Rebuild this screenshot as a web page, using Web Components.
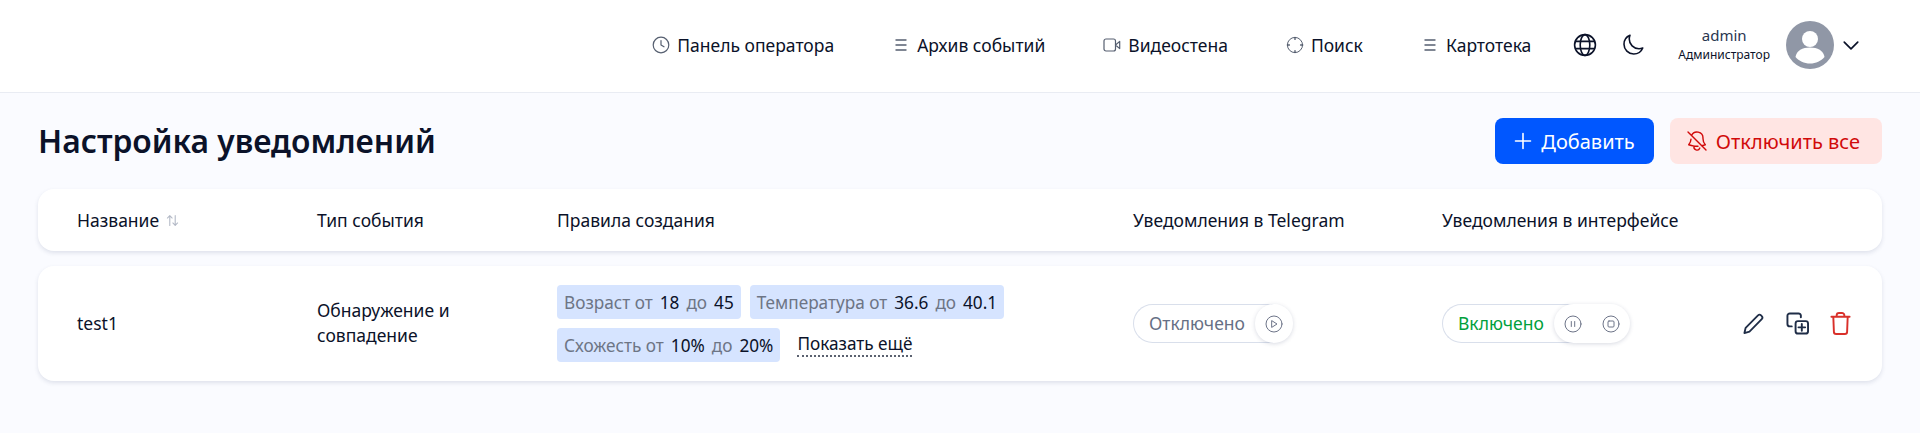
<!DOCTYPE html>
<html lang="ru">
<head>
<meta charset="utf-8">
<title>Настройка уведомлений</title>
<style>
    html, body {
        margin: 0;
        background: #fafbff;
        font-family: "Noto Sans", "Open Sans", sans-serif;
        color: #0b1426;
    }
</style>
</head>
<body>
<app-header>
    <nav-item label="Панель оператора" icon="clock"></nav-item>
    <nav-item label="Архив событий" icon="list"></nav-item>
    <nav-item label="Видеостена" icon="video"></nav-item>
    <nav-item label="Поиск" icon="target"></nav-item>
    <nav-item label="Картотека" icon="list"></nav-item>
</app-header>

<notify-page>
    <span slot="title">Настройка уведомлений</span>
    <action-button slot="actions" kind="primary">Добавить</action-button>
    <action-button slot="actions" kind="danger">Отключить все</action-button>

    <table-head></table-head>
    <rule-row name="test1" type="Обнаружение и совпадение">
        <rule-chip label="Возраст" from="18" to="45"></rule-chip>
        <rule-chip label="Температура" from="36.6" to="40.1"></rule-chip>
        <rule-chip label="Схожесть" from="10%" to="20%"></rule-chip>
        <more-link>Показать ещё</more-link>
    </rule-row>
</notify-page>

<script>
const svg = (w, h, box, body, extra = '') =>
    `<svg width="${w}" height="${h}" viewBox="${box}" fill="none" stroke="currentColor" stroke-linecap="round" stroke-linejoin="round" ${extra}>${body}</svg>`;

const navIcons = {
    clock: svg(18, 18, '0 0 18 18', '<circle cx="9" cy="9" r="7.8" stroke-width="1.2"/><path d="M9 4.6V9l3 1.8" stroke-width="1.2"/>'),
    list: svg(18, 18, '0 0 18 18', '<path d="M4 4h10M4 9h10M4 14h10" stroke-width="1.4"/>'),
    video: svg(18, 18, '0 0 18 18', '<rect x="1" y="3" width="11.5" height="12" rx="2" stroke-width="1.2"/><path d="M12.5 9l4.2-3.6v7.2z" stroke-width="1.2"/>'),
    target: svg(18, 18, '0 0 18 18', '<circle cx="9" cy="9" r="7.6" stroke-width="1"/><path d="M9 1.400v2M9 14.600v2M1.400 9h2M14.600 9h2" stroke-width="1.4"/>')
};

class NavItem extends HTMLElement {
    connectedCallback() {
        const root = this.attachShadow({ mode: 'open' });
        root.innerHTML = `
            <style>
                :host { display: flex; align-items: center; gap: 7px; font-size: 17.5px; font-weight: 400; color: #0b1229; white-space: nowrap; }
                .icon { display: flex; color: #565f70; }
            </style>
            <span class="icon">${navIcons[this.getAttribute('icon')]}</span>
            <span>${this.getAttribute('label')}</span>`;
    }
}

const appHeaderTemplate = document.createElement('template');
appHeaderTemplate.innerHTML = `
    <style>
        :host { display: block; }
        .header {
            height: 92px;
            box-sizing: content-box;
            background: #fff;
            border-bottom: 1px solid #e9ecf3;
            display: flex;
            align-items: center;
            justify-content: flex-end;
            padding-right: 60px;
        }
        .inner { display: flex; align-items: center; margin-top: -2px; }
        nav { display: flex; align-items: center; gap: 58px; }
        .tools { display: flex; align-items: center; gap: 24px; margin-left: 42px; color: #0b1229; }
        .tools svg { display: block; }
        .user { display: flex; align-items: center; margin-left: 33px; }
        .who { display: flex; flex-direction: column; align-items: center; line-height: 1; }
        .who b { font-weight: 400; font-size: 15px; line-height: 20px; color: #2a3650; }
        .who small { font-size: 12px; line-height: 20px; color: #0b1229; }
        .avatar { margin-left: 16px; display: block; }
        .chev { margin-left: 8px; display: block; color: #0b1229; }
    </style>
    <header class="header">
        <div class="inner">
        <nav><slot></slot></nav>
        <div class="tools">
            ${svg(24, 24, '0 0 24 24', '<circle cx="12" cy="12" r="10.4"/><ellipse cx="12" cy="12" rx="4.8" ry="10.4"/><path d="M2.6 8.4h18.8M2.6 15.6h18.8"/>', 'stroke-width="1.6"')}
            ${svg(24, 24, '0 0 24 24', '<path d="M21.752 15.002A9.718 9.718 0 0118 15.75c-5.385 0-9.75-4.365-9.75-9.75 0-1.33.266-2.597.748-3.752A9.753 9.753 0 003 11.25C3 16.635 7.365 21 12.75 21a9.753 9.753 0 009.002-5.998z"/>', 'stroke-width="1.6"')}
        </div>
        <div class="user">
            <div class="who"><b>admin</b><small>Администратор</small></div>
            <svg class="avatar" width="48" height="48" viewBox="0 0 48 48">
                <circle cx="24" cy="24" r="24" fill="#9097a6"/>
                <circle cx="24" cy="18" r="8" fill="#fff"/>
                <path d="M9.5 36c1-6.5 7-9.500 14.500-9.500S37.500 29.500 38.500 36c-3.500 4-8.500 6.500-14.500 6.500S13 40 9.500 36z" fill="#fff"/>
            </svg>
            <span class="chev">${svg(18, 18, '0 0 16 16', '<path d="M2 5.500l6 6 6-6"/>', 'stroke-width="1.5" style="display:block"')}</span>
        </div>
        </div>
    </header>`;

class AppHeader extends HTMLElement {
    constructor() {
        super();
        this.attachShadow({ mode: 'open' });
        this.shadowRoot.appendChild(appHeaderTemplate.content.cloneNode(true));
    }
}

const pageTemplate = document.createElement('template');
pageTemplate.innerHTML = `
    <style>
        :host { display: block; padding: 25px 38px 52px; }
        .top { display: flex; align-items: center; justify-content: space-between; margin-bottom: 25px; }
        h1 { margin: 0; font-size: 31.8px; line-height: 46px; font-weight: 600; color: #0b1229; }
        .actions { display: flex; gap: 16px; }
        .list { display: flex; flex-direction: column; gap: 15px; }
    </style>
    <div class="top">
        <h1><slot name="title"></slot></h1>
        <div class="actions"><slot name="actions"></slot></div>
    </div>
    <div class="list"><slot></slot></div>`;

class NotifyPage extends HTMLElement {
    constructor() {
        super();
        this.attachShadow({ mode: 'open' });
        this.shadowRoot.appendChild(pageTemplate.content.cloneNode(true));
    }
}

class ActionButton extends HTMLElement {
    connectedCallback() {
        const primary = this.getAttribute('kind') === 'primary';
        const icon = primary
            ? svg(20, 20, '0 0 20 20', '<path d="M10 2.500v15M2.500 10h15"/>', 'stroke-width="1.6"')
            : svg(24, 24, '0 0 24 24', '<path d="M9.143 17.082a24.248 24.248 0 003.844.148m-3.844-.148a23.856 23.856 0 01-5.455-1.31 8.964 8.964 0 002.3-5.542m3.155 6.852a3 3 0 005.667 1.97m1.965-2.277L21 21m-4.225-4.225a23.81 23.81 0 003.536-1.003A8.967 8.967 0 0118 9.750V9A6 6 0 006.530 6.530m10.245 10.245L6.530 6.530M3 3l3.530 3.530"/>', 'stroke-width="1.4"');
        const root = this.attachShadow({ mode: 'open' });
        root.innerHTML = `
            <style>
                :host {
                    display: flex;
                    align-items: center;
                    height: 46px;
                    box-sizing: border-box;
                    border-radius: 8px;
                    font-size: 20px;
                    font-weight: 400;
                    white-space: nowrap;
                    gap: ${primary ? 8 : 7}px;
                    padding: 0 ${primary ? 19 : 22}px 0 ${primary ? 18 : 15}px;
                    background: ${primary ? '#0057ff' : '#ffe5e3'};
                    color: ${primary ? '#fff' : '#d10a0a'};
                }
                svg { display: block; }
            </style>
            ${icon}<slot></slot>`;
    }
}

const gridStyle = `
    display: grid;
    grid-template-columns: 240px 240px 576px 309px 1fr;
    align-items: center;
    background: #fff;
    border-radius: 16px;
    box-shadow: 0 2px 4px rgba(60, 72, 110, 0.14);
    padding: 0 31px 0 39px;
    box-sizing: border-box;
    font-size: 17.5px;
`;

class TableHead extends HTMLElement {
    connectedCallback() {
        const root = this.attachShadow({ mode: 'open' });
        root.innerHTML = `
            <style>
                :host { ${gridStyle} height: 62px; font-weight: 400; color: #0b1229; white-space: nowrap; }
                .sort { display: flex; align-items: center; gap: 7px; }
                svg { display: block; color: #b3b9c6; }
            </style>
            <div class="sort">Название ${svg(13, 13, '0 0 12 12', '<path d="M3.500 10.500v-9M1.300 3.700l2.200-2.200 2.200 2.200M8.500 1.500v9M6.300 8.300l2.200 2.200 2.200-2.200"/>', 'stroke-width="1"')}</div>
            <div>Тип события</div>
            <div>Правила создания</div>
            <div>Уведомления в Telegram</div>
            <div>Уведомления в интерфейсе</div>`;
    }
}

class RuleChip extends HTMLElement {
    connectedCallback() {
        const a = (n) => this.getAttribute(n);
        const root = this.attachShadow({ mode: 'open' });
        root.innerHTML = `
            <style>
                :host {
                    display: inline-flex;
                    align-items: center;
                    height: 34px;
                    padding: 0 7px;
                    gap: 7px;
                    background: #d6e4ff;
                    border-radius: 4px;
                    font-size: 17.2px;
                    color: #6d7585;
                    white-space: nowrap;
                }
                b { font-weight: 400; color: #0b1229; }
            </style>
            <span>${a('label')} от</span><b>${a('from')}</b><span>до</span><b>${a('to')}</b>`;
    }
}

class MoreLink extends HTMLElement {
    connectedCallback() {
        const root = this.attachShadow({ mode: 'open' });
        root.innerHTML = `
            <style>
                :host { display: inline-block; margin-left: 8px; font-size: 17.2px; line-height: 22px; color: #0b1229; border-bottom: 2px dotted #5b6270; white-space: nowrap; }
            </style>
            <slot></slot>`;
    }
}

const ringIcon = (inner) => svg(18, 18, '0 0 18 18', `<circle cx="9" cy="9" r="8"/>${inner}`, 'stroke-width="1" style="display:block"');

class NotifyToggle extends HTMLElement {
    connectedCallback() {
        const on = this.hasAttribute('on');
        const buttons = on
            ? ringIcon('<path d="M7.300 6.500v5M10.700 6.500v5"/>') + ringIcon('<rect x="6" y="6" width="6" height="6" rx="1"/>')
            : ringIcon('<path d="M7 5.800l5 3.200-5 3.200z"/>');
        const root = this.attachShadow({ mode: 'open' });
        root.innerHTML = `
            <style>
                :host { display: inline-flex; align-items: center; height: 39px; font-size: 17.5px; font-weight: 400; }
                .pill {
                    height: 39px;
                    box-sizing: border-box;
                    display: flex;
                    align-items: center;
                    padding: 0 30px 2px 15px;
                    border: 1px solid #d9dfeb;
                    border-right: 0;
                    border-radius: 20px 0 0 20px;
                    background: #fff;
                    color: ${on ? '#00a03c' : '#667085'};
                    white-space: nowrap;
                }
                .btns {
                    margin-left: -20px;
                    height: 39px;
                    box-sizing: border-box;
                    display: flex;
                    align-items: center;
                    gap: 20px;
                    padding: 0 10px;
                    border-radius: 20px;
                    background: #fff;
                    box-shadow: 0 1px 4px rgba(60, 72, 110, 0.2);
                    color: #6d7488;
                    position: relative;
                }
            </style>
            <div class="pill">${on ? 'Включено' : 'Отключено'}</div>
            <div class="btns">${buttons}</div>`;
    }
}

class RuleRow extends HTMLElement {
    connectedCallback() {
        const root = this.attachShadow({ mode: 'open' });
        root.innerHTML = `
            <style>
                :host { ${gridStyle} height: 115px; color: #0b1229; font-weight: 400; }
                .name { padding-bottom: 2px; }
                .type { max-width: 170px; line-height: 24.500px; padding-bottom: 2px; }
                .rules { display: flex; flex-wrap: wrap; gap: 9px; align-items: center; max-width: 500px; }
                .end { display: flex; align-items: center; justify-content: space-between; }
                .tools { display: flex; align-items: center; gap: 21px; }
                .tools svg { display: block; }
                .dark { color: #1f2d47; }
                .red { color: #d9302a; }
            </style>
            <div class="name">${this.getAttribute('name')}</div>
            <div class="type">${this.getAttribute('type')}</div>
            <div class="rules"><slot></slot></div>
            <div><notify-toggle></notify-toggle></div>
            <div class="end">
                <notify-toggle on></notify-toggle>
                <div class="tools">
                    <span class="dark">${svg(23, 23, '0 0 24 24', '<path d="M2.500 22l1.300-5.500L16.700 3.500a2.300 2.300 0 013.200 0l.7.7a2.300 2.300 0 010 3.200L7.800 20.500z"/>', 'stroke-width="1.9"')}</span>
                    <span class="dark">${svg(23, 23, '0 0 24 24', '<rect x="10" y="9.500" width="13" height="13" rx="2.500"/><path d="M15.500 5.500V3.500A2.500 2.500 0 0013 1.500H4A2.500 2.500 0 001.500 4v8.500A2.500 2.500 0 004 15h2M16.500 12.500v7M13 16h7"/>', 'stroke-width="2"')}</span>
                    <span class="red">${svg(21, 23, '0 0 21 24', '<path d="M1 5h19M6.500 5V3.500A2.500 2.500 0 019 1h3a2.500 2.500 0 012.500 2.500V5M3 5l.6 15.500A2.500 2.500 0 006 23h9a2.500 2.500 0 002.400-2.500L18 5"/>', 'stroke-width="2"')}</span>
                </div>
            </div>`;
    }
}

customElements.define('nav-item', NavItem);
customElements.define('app-header', AppHeader);
customElements.define('notify-page', NotifyPage);
customElements.define('action-button', ActionButton);
customElements.define('table-head', TableHead);
customElements.define('rule-chip', RuleChip);
customElements.define('more-link', MoreLink);
customElements.define('notify-toggle', NotifyToggle);
customElements.define('rule-row', RuleRow);
</script>
</body>
</html>
